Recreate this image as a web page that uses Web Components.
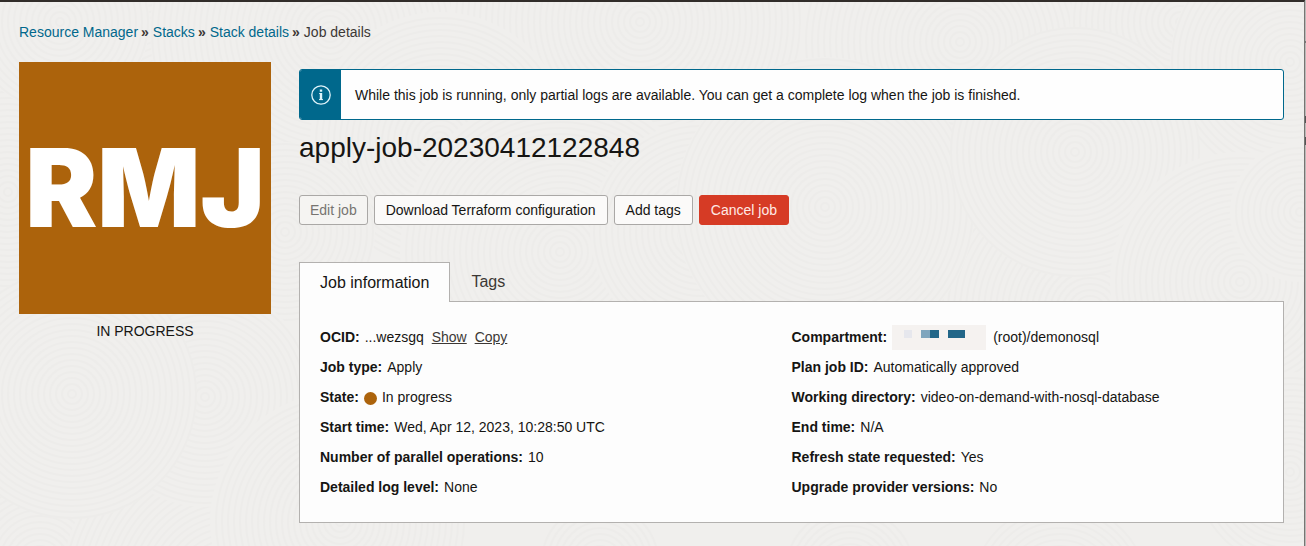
<!DOCTYPE html>
<html lang="en">
<head>
<meta charset="utf-8">
<title>Job details</title>
<style>
body { margin: 0; font-family: "Liberation Sans", Arial, sans-serif; font-size: 14px; line-height: 20px; color: #161513; background: linear-gradient(#0000 41px, #777 41px 43px, #0000 43px 116px, #555 116px 123px, #0000 123px 137px, #555 137px 145px, #0000 145px) #bbbab8; }
</style>
</head>
<body>
<job-page>
  <bread-crumbs slot="crumbs">
    <crumb-item href="#rm">Resource Manager</crumb-item>
    <crumb-item href="#stacks">Stacks</crumb-item>
    <crumb-item href="#stack">Stack details</crumb-item>
    <crumb-item>Job details</crumb-item>
  </bread-crumbs>
  <status-tile slot="side" code="RMJ">IN PROGRESS</status-tile>
  <info-banner>While this job is running, only partial logs are available. You can get a complete log when the job is finished.</info-banner>
  <page-title>apply-job-20230412122848</page-title>
  <action-bar>
    <action-button disabled>Edit job</action-button>
    <action-button>Download Terraform configuration</action-button>
    <action-button>Add tags</action-button>
    <action-button kind="danger">Cancel job</action-button>
  </action-bar>
  <tab-panel>
    <tab-button slot="tab" selected>Job information</tab-button>
    <tab-button slot="tab">Tags</tab-button>
    <field-list>
      <field-row label="OCID:">...wezsgq <text-link href="#show">Show</text-link> <text-link href="#copy">Copy</text-link></field-row>
      <field-row label="Job type:">Apply</field-row>
      <field-row label="State:"><state-dot></state-dot>In progress</field-row>
      <field-row label="Start time:">Wed, Apr 12, 2023, 10:28:50 UTC</field-row>
      <field-row label="Number of parallel operations:">10</field-row>
      <field-row label="Detailed log level:">None</field-row>
    </field-list>
    <field-list>
      <field-row label="Compartment:"><masked-name></masked-name>(root)/demonosql</field-row>
      <field-row label="Plan job ID:">Automatically approved</field-row>
      <field-row label="Working directory:">video-on-demand-with-nosql-database</field-row>
      <field-row label="End time:">N/A</field-row>
      <field-row label="Refresh state requested:">Yes</field-row>
      <field-row label="Upgrade provider versions:">No</field-row>
    </field-list>
  </tab-panel>
</job-page>
<script>
const define = (name, html, setup) => {
  const template = document.createElement('template');
  template.innerHTML = html;
  customElements.define(name, class extends HTMLElement {
    constructor() {
      super();
      this.attachShadow({ mode: 'open' }).append(template.content.cloneNode(true));
    }
    connectedCallback() { if (setup) setup(this, this.shadowRoot); }
  });
};

/* Combed-sand texture: overlapping discs filled with concentric rings. */
define('sand-texture', `
<style>
:host { display: block; position: absolute; inset: 0; overflow: hidden; z-index: -1; background: #f0efed; }
svg { display: block; width: 100%; height: 100%; }
circle { fill: none; stroke: #edecea; stroke-width: 2; }
circle.base { fill: #f0efed; stroke: none; }
</style>
<svg aria-hidden="true"></svg>`, (host, root) => {
  const discs = [
    [40, 560, 190], [230, 590, 170], [180, 130, 200], [330, 30, 180], [640, 20, 190], [440, 140, 130],
    [960, 40, 160], [1180, 20, 110], [1290, 60, 120], [560, 250, 160], [700, 230, 110],
    [1090, 310, 150], [825, 205, 150], [1075, 150, 125], [1240, 280, 130], [1300, 210, 70],
    [8, 190, 120], [285, 230, 90], [205, 395, 110], [72, 392, 125], [340, 520, 130], [60, 20, 90],
    [600, 560, 60], [850, 570, 70], [1060, 590, 90], [1290, 470, 100]
  ];
  root.querySelector('svg').innerHTML = discs.map(([x, y, r]) => {
    let rings = `<circle class="base" cx="${x}" cy="${y}" r="${r}"/>`;
    for (let i = 4; i < r; i += 6) rings += `<circle cx="${x}" cy="${y}" r="${i}"/>`;
    return rings;
  }).join('');
});

define('job-page', `
<style>
:host { display: block; position: relative; isolation: isolate; box-sizing: border-box; min-height: 100vh; overflow: hidden; margin-right: 1px; padding: 20px 20px 23px 19px; border-top: 2px solid #312d2a; border-right: 1px solid #777573; }
.columns { display: grid; grid-template-columns: 252px minmax(0, 1fr); column-gap: 28px; margin-top: 20px; }
main { padding-top: 7px; }
</style>
<sand-texture></sand-texture>
<slot name="crumbs"></slot>
<div class="columns"><aside><slot name="side"></slot></aside><main><slot></slot></main></div>`);

define('bread-crumbs', `
<style>:host { display: block; } nav { display: flex; gap: 4px; }</style>
<nav aria-label="Breadcrumb"><slot></slot></nav>`);

define('crumb-item', `
<style>
:host { display: flex; gap: 3px; color: #3c3835; }
a { color: #00688c; text-decoration: none; }
b { font-size: 14px; }
</style>
<span><slot></slot></span>`, (host, root) => {
  if (!host.hasAttribute('href')) return;
  const link = document.createElement('a');
  link.href = host.getAttribute('href');
  link.append(document.createElement('slot'));
  const mark = document.createElement('b');
  mark.textContent = '»';
  root.querySelector('span').replaceWith(link, mark);
});

define('status-tile', `
<style>
:host { display: block; text-align: center; }
.tile { display: grid; place-items: center; aspect-ratio: 1; background: #ac630c; color: #fff; font: 900 108px/120px Inter, sans-serif; }
.state { margin-top: 7px; }
</style>
<div class="tile"></div><div class="state"><slot></slot></div>`, (host, root) => {
  root.querySelector('.tile').textContent = host.getAttribute('code');
});

define('info-banner', `
<style>
:host { display: flex; border: 1px solid #00688c; border-radius: 3px; background: #fefefe; overflow: hidden; }
.mark { display: grid; place-items: center; flex: none; width: 41px; background: #00688c; }
p { margin: 0; padding: 15px 14px 14px; }
</style>
<div class="mark"><svg width="20" height="20" viewBox="0 0 20 20" fill="none" stroke="#dff4fa" aria-hidden="true"><circle cx="10" cy="10" r="9.2" stroke-width="1.3"/><path d="M10 8v7" stroke-width="2.4"/><path d="M8.2 8.5H10M8 14.6h4" stroke-width="1"/><path d="M8.8 4.6h2.4v2.1H8.8z" fill="#dff4fa" stroke="none"/></svg></div>
<p><slot></slot></p>`);

define('page-title', `
<style>:host { display: block; margin-top: 10px; } h1 { margin: 0; font-size: 28px; line-height: 36px; font-weight: 400; }</style>
<h1><slot></slot></h1>`);

define('action-bar', `<style>:host { display: flex; gap: 6px; margin-top: 29px; }</style><slot></slot>`);

define('action-button', `
<style>
:host { display: block; }
button { display: block; box-sizing: border-box; height: 30px; padding: 0 11px; border: 1px solid #aaa8a6; border-radius: 3px; background: #fbfaf9; color: #161513; font: inherit; }
button:disabled { background: #f5f4f2; color: #777471; padding: 0 10px; }
:host([kind="danger"]) button { background: #d63b25; border-color: #d63b25; color: #ffeae5; }
</style>
<button type="button"><slot></slot></button>`, (host, root) => {
  root.querySelector('button').disabled = host.hasAttribute('disabled');
});

define('tab-panel', `
<style>
:host { display: block; margin-top: 37px; }
.tabs { display: flex; position: relative; margin-bottom: -1px; }
.body { display: grid; grid-template-columns: 1fr 1fr; border: 1px solid #b3b1af; background: #fdfdfd; padding: 20px; }
</style>
<div class="tabs" role="tablist"><slot name="tab"></slot></div>
<div class="body" role="tabpanel"><slot></slot></div>`);

define('tab-button', `
<style>
:host { display: block; }
button { display: block; box-sizing: border-box; height: 40px; padding: 0 20px 2px; border: 1px solid transparent; border-bottom: 0; background: none; color: #3c3835; font: inherit; font-size: 16px; }
:host([selected]) button { background: #fdfdfd; border-color: #b3b1af; color: #161513; padding-bottom: 0; }
</style>
<button type="button" role="tab"><slot></slot></button>`, (host, root) => {
  root.querySelector('button').setAttribute('aria-selected', host.hasAttribute('selected'));
});

define('field-list', `<style>:host { display: block; }</style><slot></slot>`);

define('field-row', `
<style>
:host { display: flex; align-items: center; gap: 5px; height: 30px; white-space: nowrap; }
</style>
<b></b><span><slot></slot></span>`, (host, root) => {
  root.querySelector('b').textContent = host.getAttribute('label');
});

define('text-link', `
<style>:host { display: inline-block; margin-left: 4px; } a { color: #3c3835; text-decoration: underline; }</style>
<a><slot></slot></a>`, (host, root) => {
  root.querySelector('a').href = host.getAttribute('href');
});

define('state-dot', `
<style>:host { display: inline-block; width: 13px; height: 13px; margin-right: 5px; border-radius: 50%; background: #ac630c; vertical-align: -3px; }</style>`);

define('masked-name', `
<style>:host { display: inline-block; margin-right: 7px; vertical-align: -8px; } svg { display: block; }</style>
<svg width="94" height="25" aria-hidden="true"><path fill="#f5f2f0" d="M0 0h94v25H0z"/><path fill="#e6e7ed" d="M12 5h8v8h-8z"/><path fill="#7fa5bd" d="M29 5h9v8h-9z"/><path fill="#226688" d="M38 5h9v8h-9zM56 5h17v8H56z"/></svg>`);
</script>
</body>
</html>
